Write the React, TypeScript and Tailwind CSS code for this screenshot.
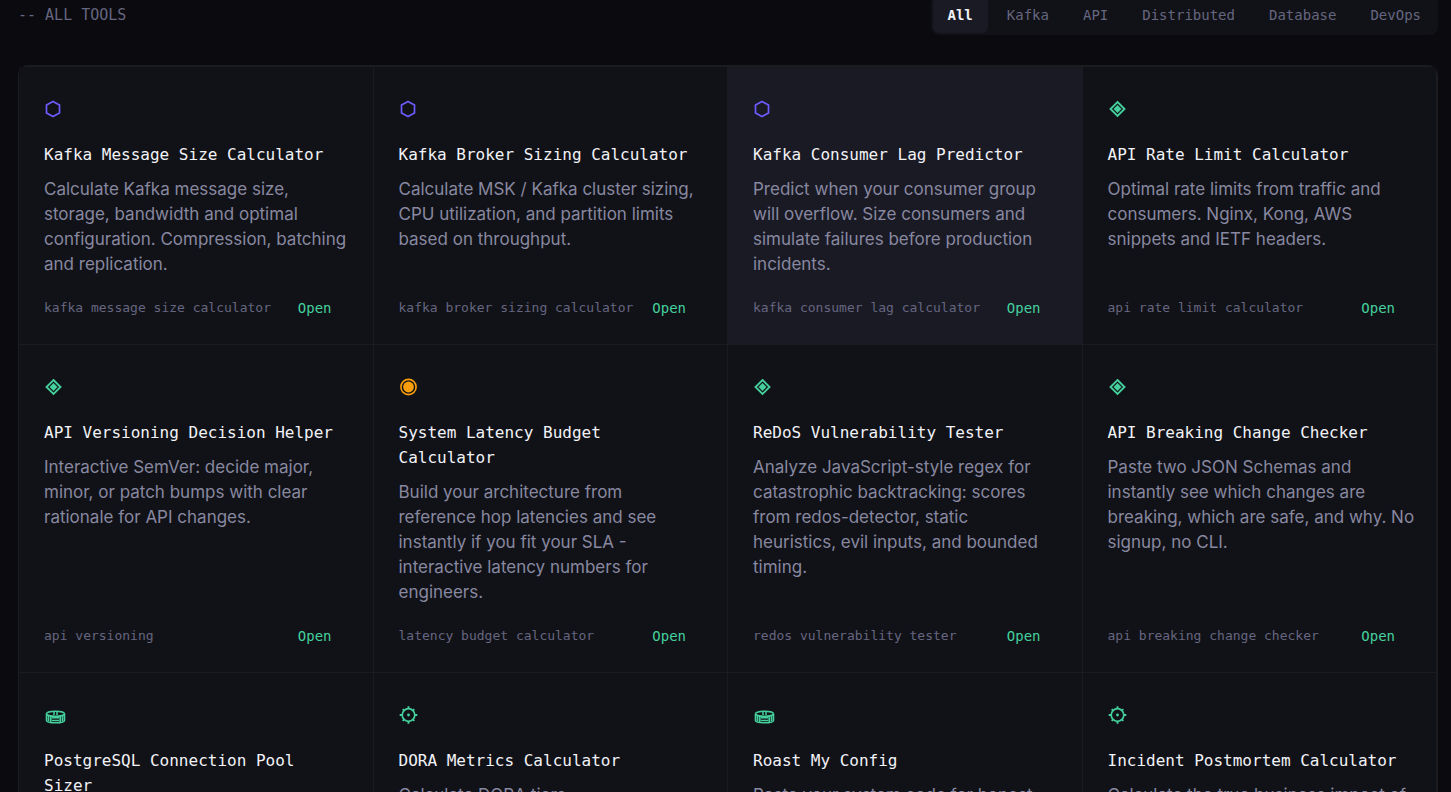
import { useState } from 'react';
import type { ReactNode } from 'react';
import clsx from 'clsx';

type IconName = 'hexagon' | 'diamond' | 'target' | 'drum' | 'gear';

interface Tool {
  icon: IconName;
  title: string;
  description: string;
  keyword: string;
  category: string;
  active?: boolean;
}

const filters = ['All', 'Kafka', 'API', 'Distributed', 'Database', 'DevOps'];

const tools: Tool[] = [
  {
    icon: 'hexagon',
    title: 'Kafka Message Size Calculator',
    description:
      'Calculate Kafka message size, storage, bandwidth and optimal configuration. Compression, batching and replication.',
    keyword: 'kafka message size calculator',
    category: 'Kafka',
  },
  {
    icon: 'hexagon',
    title: 'Kafka Broker Sizing Calculator',
    description:
      'Calculate MSK / Kafka cluster sizing, CPU utilization, and partition limits based on throughput.',
    keyword: 'kafka broker sizing calculator',
    category: 'Kafka',
  },
  {
    icon: 'hexagon',
    title: 'Kafka Consumer Lag Predictor',
    description:
      'Predict when your consumer group will overflow. Size consumers and simulate failures before production incidents.',
    keyword: 'kafka consumer lag calculator',
    category: 'Kafka',
    active: true,
  },
  {
    icon: 'diamond',
    title: 'API Rate Limit Calculator',
    description:
      'Optimal rate limits from traffic and consumers. Nginx, Kong, AWS snippets and IETF headers.',
    keyword: 'api rate limit calculator',
    category: 'API',
  },
  {
    icon: 'diamond',
    title: 'API Versioning Decision Helper',
    description:
      'Interactive SemVer: decide major, minor, or patch bumps with clear rationale for API changes.',
    keyword: 'api versioning',
    category: 'API',
  },
  {
    icon: 'target',
    title: 'System Latency Budget Calculator',
    description:
      'Build your architecture from\nreference hop latencies and see instantly if you fit your SLA - interactive latency numbers for engineers.',
    keyword: 'latency budget calculator',
    category: 'Distributed',
  },
  {
    icon: 'diamond',
    title: 'ReDoS Vulnerability Tester',
    description:
      'Analyze JavaScript-style regex for catastrophic backtracking: scores from redos-detector, static\nheuristics, evil inputs, and bounded timing.',
    keyword: 'redos vulnerability tester',
    category: 'API',
  },
  {
    icon: 'diamond',
    title: 'API Breaking Change Checker',
    description:
      'Paste two JSON Schemas and instantly see which changes are breaking, which are safe, and why. No signup, no CLI.',
    keyword: 'api breaking change checker',
    category: 'API',
  },
  {
    icon: 'drum',
    title: 'PostgreSQL Connection Pool Sizer',
    description: 'Size connection pools from cores, traffic and query time.',
    keyword: 'postgresql pool size',
    category: 'Database',
  },
  {
    icon: 'gear',
    title: 'DORA Metrics Calculator',
    description: 'Calculate DORA tiers\nacross your delivery metrics.',
    keyword: 'dora metrics calculator',
    category: 'DevOps',
  },
  {
    icon: 'drum',
    title: 'Roast My Config',
    description: 'Paste your system code for honest feedback on your settings.',
    keyword: 'config review',
    category: 'Database',
  },
  {
    icon: 'gear',
    title: 'Incident Postmortem Calculator',
    description: 'Calculate the true business impact of an incident.',
    keyword: 'incident cost calculator',
    category: 'DevOps',
  },
];

const iconColors: Record<IconName, string> = {
  hexagon: 'text-[#6c5cff]',
  diamond: 'text-[#44cf9c]',
  target: 'text-[#f99d0b]',
  drum: 'text-[#44cf9c]',
  gear: 'text-[#44cf9c]',
};

const iconShapes: Record<IconName, ReactNode> = {
  hexagon: (
    <path
      d="M9 4.5 15.5 8v8L9 19.5 2.5 16V8z"
      fill="none"
      stroke="currentColor"
      strokeWidth="1.7"
    />
  ),
  diamond: (
    <>
      <path d="M9.5 5l7 7-7 7-7-7z" fill="none" stroke="currentColor" strokeWidth="1.9" />
      <path d="M9.5 8l4 4-4 4-4-4z" fill="currentColor" />
    </>
  ),
  target: (
    <>
      <circle cx="9.5" cy="12" r="7.6" fill="none" stroke="currentColor" strokeWidth="1.6" />
      <circle cx="9.5" cy="12" r="5.4" fill="currentColor" />
    </>
  ),
  drum: (
    <g fill="none" stroke="currentColor">
      <ellipse cx="11.5" cy="10.8" rx="9" ry="2.6" strokeWidth="1.6" />
      <path d="M2.5 11v6.500c0 1.500 4 2.300 9 2.300s9-.8 9-2.300V11" strokeWidth="1.6" />
      <path d="M4.5 12v6.500M6.800 12.500v6.500M16.200 12.500v6.500M18.500 12v6.500" strokeWidth="1.7" />
      <path d="M8 14.800h7M8 17.400h7M10 9v3M13 9v3" strokeWidth="1.5" />
    </g>
  ),
  gear: (
    <g fill="none" stroke="currentColor">
      <circle cx="9.5" cy="12" r="6.3" strokeWidth="1.7" />
      <path
        d="M9.5 6V3.200M9.500 18v2.800M3.500 12H.7M15.500 12h2.800M5.200 7.700 3.700 6.200M13.800 7.700l1.500-1.500M5.200 16.300l-1.500 1.500M13.800 16.300l1.500 1.500"
        strokeWidth="1.9"
      />
      <circle cx="9.5" cy="12" r="1.4" fill="currentColor" stroke="none" />
    </g>
  ),
};

function ToolIcon({ name }: { name: IconName }) {
  return (
    <svg viewBox="0 0 24 24" aria-hidden="true" className={clsx('h-6 w-6', iconColors[name])}>
      {iconShapes[name]}
    </svg>
  );
}

function ToolCard({ tool }: { tool: Tool }) {
  return (
    <a
      href="#"
      className={clsx(
        'flex flex-col py-[25px] pr-5 pl-[25px] transition-colors hover:bg-[#1a1a24]',
        tool.active ? 'bg-[#1a1a24]' : 'bg-[#111217]',
      )}
    >
      <div className="mb-4 flex h-[34px] items-center">
        <ToolIcon name={tool.icon} />
      </div>
      <h3 className="pr-[5px] font-['DejaVu_Sans_Mono',monospace] text-[16px] leading-[25px] text-[#f2f2f7]">
        {tool.title}
      </h3>
      <p className="mt-[10px] font-['Inter',sans-serif] text-[17px] leading-[25px] whitespace-pre-line text-[#8888a0]">
        {tool.description}
      </p>
      <div className="mt-auto flex items-center justify-between pt-5 pr-[21px] font-['DejaVu_Sans_Mono',monospace] leading-[22px]">
        <span className="text-[13px] text-[#666680]">{tool.keyword}</span>
        <span className="text-[14px] text-[#44cf9c]">Open</span>
      </div>
    </a>
  );
}

export default function App() {
  const [filter, setFilter] = useState('All');
  const visible = tools.filter((t) => filter === 'All' || t.category === filter);

  return (
    <main className="min-h-screen bg-[#0a0a0f] pr-[13px] pb-10 pl-[18px]">
      <header className="-mt-[5px] mb-[30px] flex items-center justify-between font-['DejaVu_Sans_Mono',monospace]">
        <h2 className="text-[15px] text-[#666680]">-- ALL TOOLS</h2>
        <div className="flex gap-1 rounded-lg bg-[#111217] p-0.5">
          {filters.map((name) => (
            <button
              key={name}
              type="button"
              onClick={() => setFilter(name)}
              className={clsx(
                'h-9 rounded-md px-[15px] text-[14px]',
                name === filter ? 'bg-[#1a1a24] font-bold text-[#f2f2f7]' : 'text-[#666680]',
              )}
            >
              {name}
            </button>
          ))}
        </div>
      </header>

      <section className="grid grid-cols-4 gap-px rounded-[10px] border-t-2 border-r-2 border-l border-[#1b1b20] bg-[#1b1b20]">
        {visible.map((tool) => (
          <ToolCard key={tool.title} tool={tool} />
        ))}
      </section>
    </main>
  );
}
